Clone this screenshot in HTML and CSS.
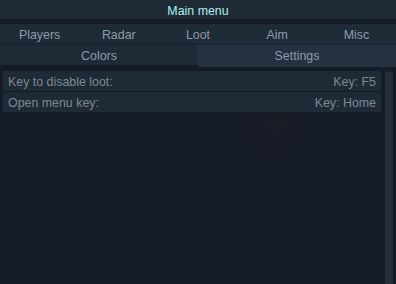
FILE: index.html
```html
<!DOCTYPE html>
<html>
<head>
<meta charset="utf-8">
<link rel="stylesheet" href="styles.css">
</head>
<body>
<div class="app">
  <div class="title">Main menu</div>
  <div class="tabs tabs-5">
    <div class="tab">Players</div>
    <div class="tab">Radar</div>
    <div class="tab">Loot</div>
    <div class="tab">Aim</div>
    <div class="tab">Misc</div>
  </div>
  <div class="tabs tabs-2">
    <div class="tab">Colors</div>
    <div class="tab active">Settings</div>
  </div>
  <div class="body">
    <div class="list">
      <div class="row"><span>Key to disable loot:</span><span>Key: F5</span></div>
      <div class="row"><span>Open menu key:</span><span>Key: Home</span></div>
    </div>
    <div class="scrollbar"></div>
  </div>
  <div class="glow"></div>
</div>
</body>
</html>
```
FILE: styles.css
```css
html, body {
  margin: 0;
  padding: 0;
  width: 396px;
  height: 284px;
  overflow: hidden;
  background: #141b26;
  font-family: "Liberation Sans", Arial, sans-serif;
  font-size: 12.4px;
}
.app {
  position: relative;
  width: 396px;
  height: 284px;
  display: flex;
  flex-direction: column;
  background: #141b26;
}
.title {
  height: 19px;
  line-height: 22px;
  background: #1f2a37;
  color: #a9eeee;
  text-align: center;
  margin-bottom: 5px;
}
.tabs {
  display: grid;
  height: 20px;
  background: #1f2a37;
}
.tabs-5 {
  grid-template-columns: repeat(5, 1fr);
  border-bottom: 1px solid #172030;
}
.tabs-2 {
  grid-template-columns: 1fr 1fr;
}
.tab {
  line-height: 22px;
  text-align: center;
  color: #8e9ba8;
}
.tab.active {
  background: #243140;
}
.body {
  flex: 1;
  display: flex;
  gap: 4px;
  padding: 6px 3px 0 3px;
  position: relative;
  z-index: 1;
}
.list {
  flex: 1;
  display: flex;
  flex-direction: column;
  gap: 1px;
}
.row {
  display: flex;
  justify-content: space-between;
  height: 20px;
  line-height: 22px;
  padding: 0 5px;
  background: #1f2a37;
  color: #7e8893;
}
.scrollbar {
  width: 8px;
  background: #222e3c;
  border-radius: 4px 4px 0 0;
}
.glow {
  position: absolute;
  left: 235px;
  top: 95px;
  width: 80px;
  height: 60px;
  border-radius: 50%;
  background: radial-gradient(ellipse at center, rgba(60,35,38,0.18), rgba(20,27,38,0) 70%);
}
```
